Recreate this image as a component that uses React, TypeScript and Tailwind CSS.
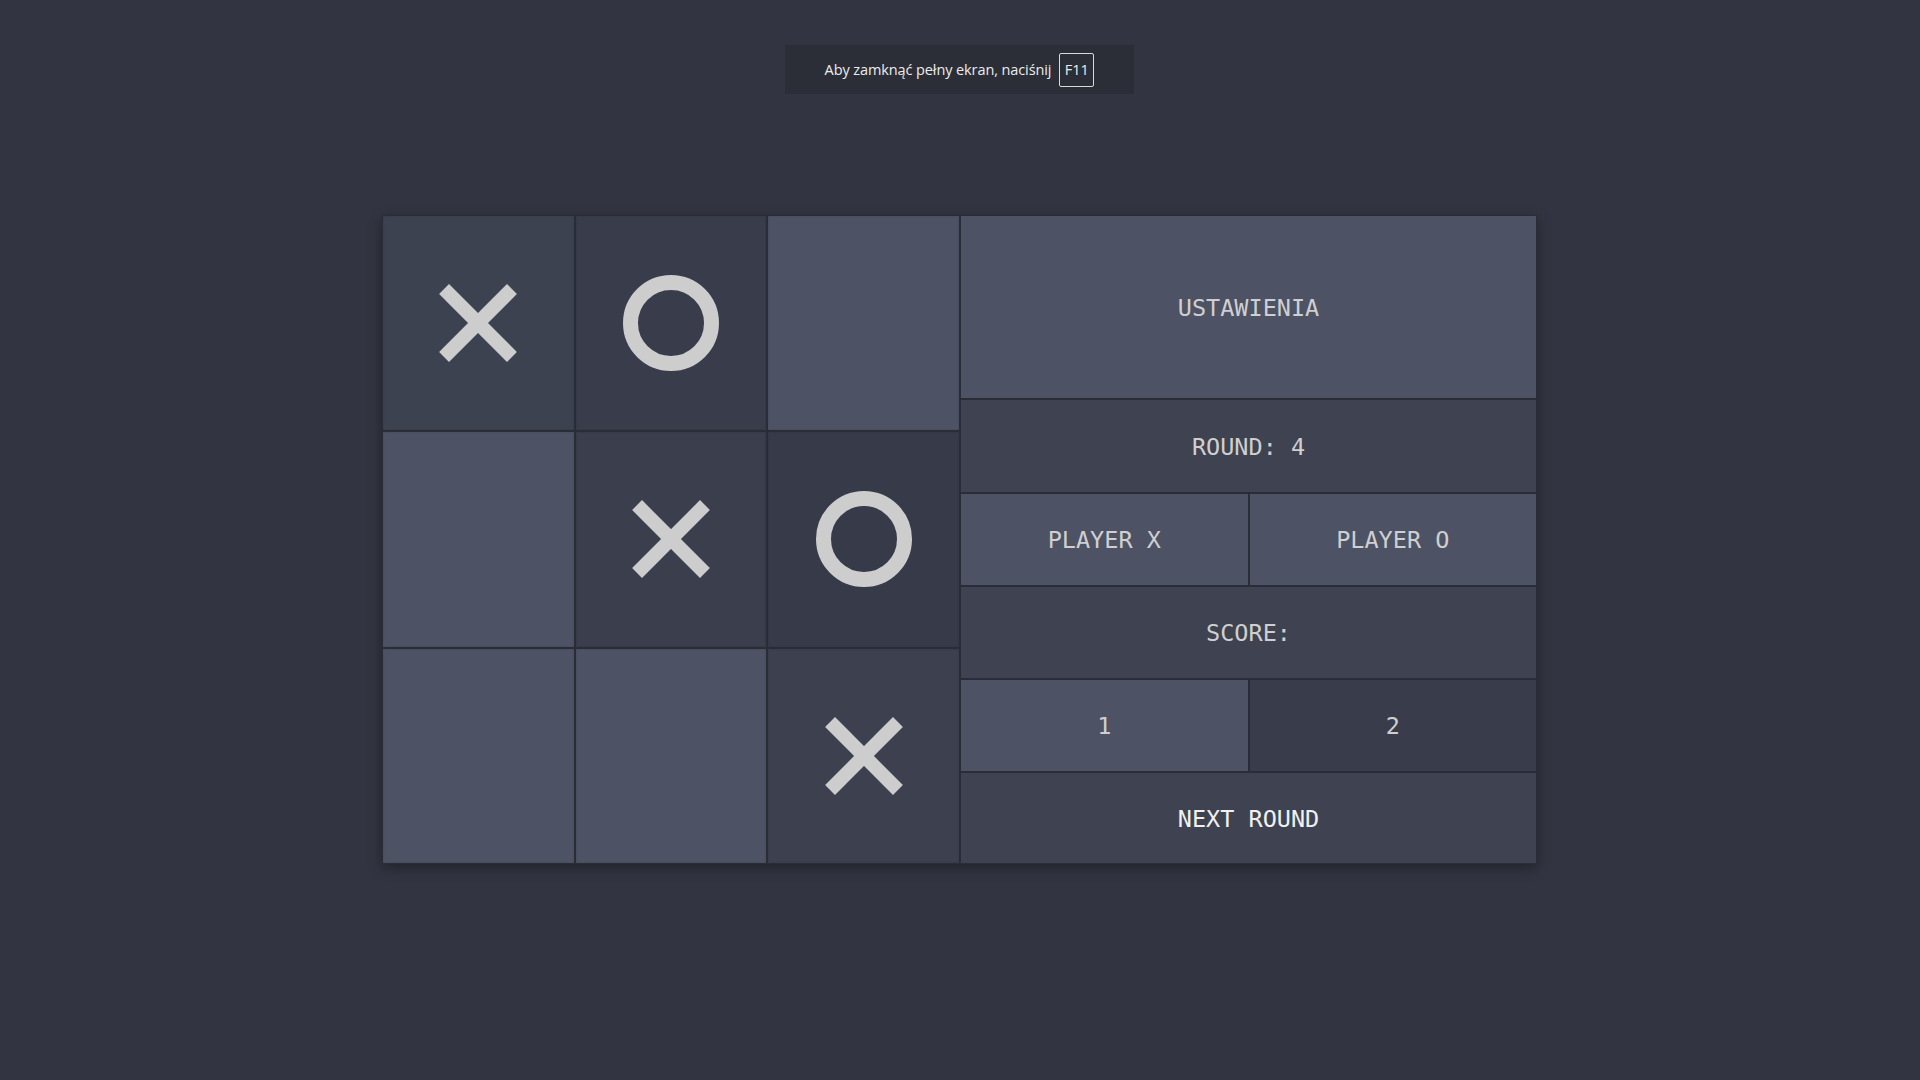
import React from 'react'

type Mark = 'X' | 'O' | null

interface Cell {
  mark: Mark
  bg: string
}

const CELLS: Cell[] = [
  { mark: 'X', bg: 'bg-[#3d4251]' },
  { mark: 'O', bg: 'bg-[#393c4b]' },
  { mark: null, bg: 'bg-[#4d5265]' },
  { mark: null, bg: 'bg-[#4d5265]' },
  { mark: 'X', bg: 'bg-[#3a3e4d]' },
  { mark: 'O', bg: 'bg-[#373a49]' },
  { mark: null, bg: 'bg-[#4d5265]' },
  { mark: null, bg: 'bg-[#4d5265]' },
  { mark: 'X', bg: 'bg-[#3c404f]' },
]

function XMark() {
  return (
    <svg width="80" height="80" viewBox="0 0 80 80">
      <g fill="#cdcdcd">
        <rect x="-7" y="-48" width="14" height="96" transform="translate(40 40) rotate(45)" />
        <rect x="-7" y="-48" width="14" height="96" transform="translate(40 40) rotate(-45)" />
      </g>
    </svg>
  )
}

function OMark() {
  return (
    <svg width="98" height="98" viewBox="0 0 98 98">
      <circle cx="49" cy="49" r="40.5" fill="none" stroke="#cdcdcd" strokeWidth="15" />
    </svg>
  )
}

const mono = "font-['DejaVu_Sans_Mono',monospace]"
const row = 'border border-[#2a2d37] flex items-center justify-center pt-[3px]'

export default function App() {
  return (
    <div className="min-h-screen w-full bg-[#323541] relative">
      {/* Fullscreen hint */}
      <div className="absolute left-[785px] top-[45px] w-[349px] h-[49px] bg-[#2b2e37] flex items-center justify-center gap-[8px] font-['Open_Sans',sans-serif]">
        <span className="text-[14.5px] text-[#ececec] tracking-[-0.1px]">Aby zamknąć pełny ekran, naciśnij</span>
        <span className="w-[35px] h-[34px] border border-[#d8d8d8] rounded-[2px] flex items-center justify-center text-[14.5px] text-[#ececec]">
          F11
        </span>
      </div>

      <div className="pt-[215px] pl-[382px] flex">
        <div className="flex w-[1155px] h-[649px] shadow-[0_4px_12px_rgba(0,0,0,0.35)]">
          {/* Board */}
          <div className="grid grid-cols-3 grid-rows-3 w-[578px] h-[649px]">
            {CELLS.map((cell, i) => (
              <div
                key={i}
                className={`${cell.bg} border border-[#2a2d37] flex items-center justify-center shadow-[inset_0_0_2px_rgba(0,0,0,0.15)]`}
              >
                {cell.mark === 'X' && <XMark />}
                {cell.mark === 'O' && <OMark />}
              </div>
            ))}
          </div>

          {/* Settings panel */}
          <div className={`flex flex-col w-[577px] h-[649px] ${mono} text-[23.5px] text-[#cfcfcf]`}>
            <div className={`h-[184px] bg-[#4d5265] ${row}`}>USTAWIENIA</div>
            <div className={`h-[94px] bg-[#3e4251] ${row}`}>ROUND: 4</div>
            <div className="h-[93px] flex">
              <div className={`flex-1 bg-[#4d5265] ${row}`}>PLAYER X</div>
              <div className={`flex-1 bg-[#4d5265] ${row}`}>PLAYER O</div>
            </div>
            <div className={`h-[93px] bg-[#3e4251] ${row}`}>SCORE:</div>
            <div className="h-[93px] flex">
              <div className={`flex-1 bg-[#4d5265] ${row}`}>1</div>
              <div className={`flex-1 bg-[#393c4b] ${row}`}>2</div>
            </div>
            <div className={`h-[92px] bg-[#3e4251] ${row} text-[#f0f0f0]`}>NEXT ROUND</div>
          </div>
        </div>
      </div>
    </div>
  )
}
